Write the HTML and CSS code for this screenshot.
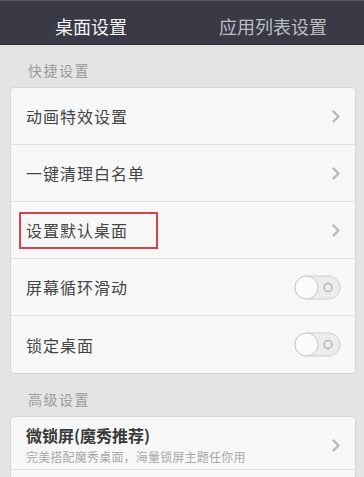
FILE: index.html
```html
<!DOCTYPE html>
<html lang="zh-CN">
<head>
    <meta charset="UTF-8">
    <meta name="viewport" content="width=device-width, initial-scale=1.0">
    <title>桌面设置</title>
    <link rel="stylesheet" href="styles.css">
</head>
<body>
    <div class="tabs">
        <div class="tab active">桌面设置</div>
        <div class="tab">应用列表设置</div>
    </div>

    <div class="section-title">快捷设置</div>
    <div class="card">
        <div class="row">
            <span class="label">动画特效设置</span>
            <svg class="chevron" width="8" height="13" viewBox="0 0 8 13"><polyline points="1.5,1.5 6.5,6.5 1.5,11.5" /></svg>
        </div>
        <div class="row">
            <span class="label">一键清理白名单</span>
            <svg class="chevron" width="8" height="13" viewBox="0 0 8 13"><polyline points="1.5,1.5 6.5,6.5 1.5,11.5" /></svg>
        </div>
        <div class="row">
            <span class="label highlight">设置默认桌面</span>
            <svg class="chevron" width="8" height="13" viewBox="0 0 8 13"><polyline points="1.5,1.5 6.5,6.5 1.5,11.5" /></svg>
        </div>
        <div class="row">
            <span class="label">屏幕循环滑动</span>
            <svg class="toggle" width="47" height="25" viewBox="0 0 47 25">
                <rect x="1" y="1" width="45" height="23" rx="11.5" class="track" />
                <circle cx="34" cy="12.5" r="4" class="dot" />
                <circle cx="12.5" cy="12.5" r="11.5" class="knob" />
            </svg>
        </div>
        <div class="row">
            <span class="label">锁定桌面</span>
            <svg class="toggle" width="47" height="25" viewBox="0 0 47 25">
                <rect x="1" y="1" width="45" height="23" rx="11.5" class="track" />
                <circle cx="34" cy="12.5" r="4" class="dot" />
                <circle cx="12.5" cy="12.5" r="11.5" class="knob" />
            </svg>
        </div>
    </div>

    <div class="section-title">高级设置</div>
    <div class="card">
        <div class="row row-tall">
            <div class="text">
                <span class="title">微锁屏(魔秀推荐)</span>
                <span class="sub">完美搭配魔秀桌面，海量锁屏主题任你用</span>
            </div>
            <svg class="chevron" width="8" height="13" viewBox="0 0 8 13"><polyline points="1.5,1.5 6.5,6.5 1.5,11.5" /></svg>
        </div>
        <div class="row"></div>
    </div>
</body>
</html>
```

FILE: styles.css
```css
* {
    margin: 0;
    padding: 0;
    box-sizing: border-box;
}

html {
    overflow: hidden;
}

body {
    font-family: "Noto Sans CJK SC", "Noto Sans", sans-serif;
    background: #e4e4e4;
    width: 364px;
    height: 477px;
    overflow: hidden;
}

.tabs {
    display: flex;
    height: 45px;
    background: #3a3a46;
    border-top: 1px solid #55555f;
    border-bottom: 1px solid #2c2c36;
}

.tab {
    flex: 1;
    display: flex;
    justify-content: center;
    align-items: center;
    padding-top: 6px;
    font-size: 18px;
    color: #bdbdc4;
}

.tab.active {
    color: #f4f4f4;
}

.section-title {
    height: 42px;
    padding: 8px 28px 0;
    display: flex;
    align-items: center;
    font-size: 14px;
    letter-spacing: 1.5px;
    color: #9a9a9a;
}

.card {
    margin: 0 8px 0 10px;
    background: #f7f7f7;
    border: 1px solid #d6d6d6;
    border-radius: 4px;
}

.row {
    height: 57px;
    display: flex;
    align-items: center;
    justify-content: space-between;
    padding: 0 14px 0 15px;
    border-bottom: 1px solid #e0e0e0;
}

.row:last-child {
    border-bottom: none;
}

.label {
    font-size: 16px;
    letter-spacing: 1px;
    color: #454545;
}

.highlight {
    display: inline-block;
    border: 2px solid #d8424a;
    padding: 0 28px 0 5px;
    margin-left: -7px;
    line-height: 33px;
}

.chevron {
    margin-right: 1px;
}

.chevron polyline {
    fill: none;
    stroke: #b8b8b8;
    stroke-width: 2.4;
    stroke-linecap: round;
    stroke-linejoin: round;
}

.toggle .track {
    fill: #ececec;
    stroke: #cfcfcf;
    stroke-width: 1;
}

.toggle .dot {
    fill: none;
    stroke: #b5b5b5;
    stroke-width: 1.5;
}

.toggle .knob {
    fill: #fbfbfb;
    stroke: #c6c6c6;
    stroke-width: 1;
}

.row-tall {
    height: 53px;
    padding-top: 4px;
}

.text {
    display: flex;
    flex-direction: column;
}

.title {
    font-size: 16px;
    font-weight: 600;
    color: #3a3a3a;
    line-height: 21px;
}

.sub {
    font-size: 12px;
    color: #a8a8a8;
    line-height: 18px;
    margin-top: 2px;
    letter-spacing: 0.2px;
}
```
